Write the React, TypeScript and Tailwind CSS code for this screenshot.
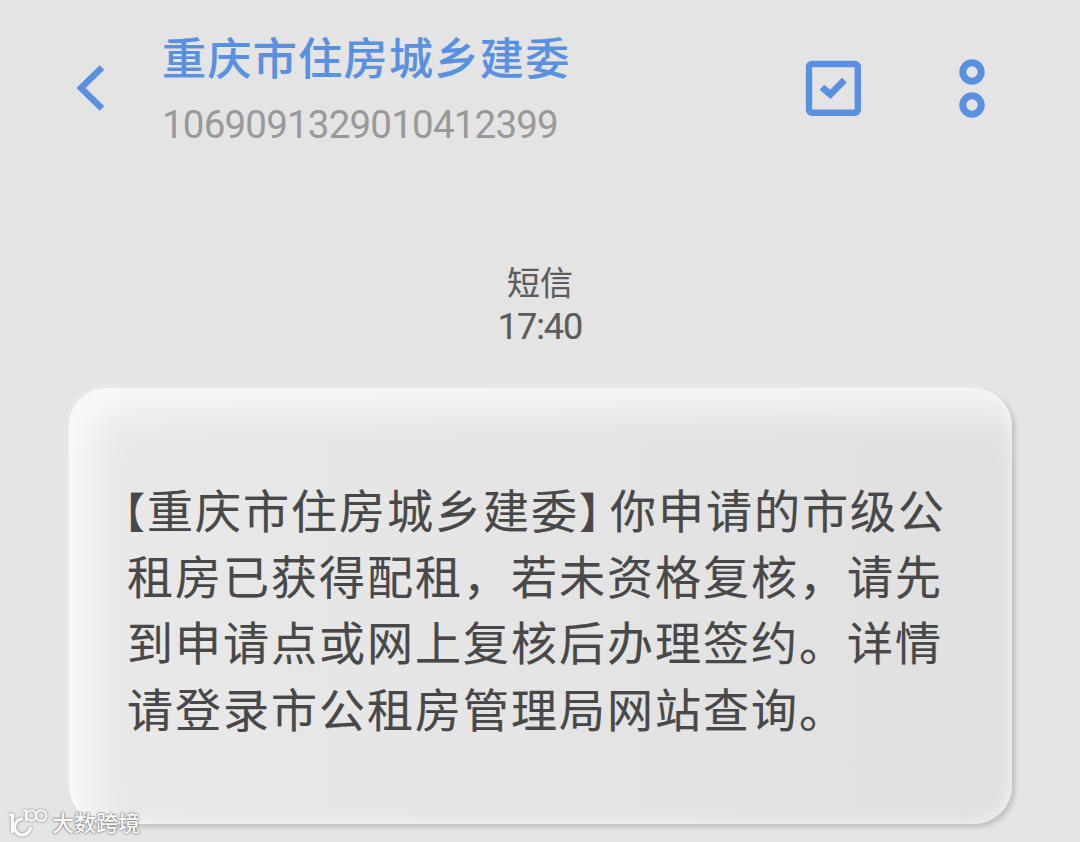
import React from 'react';

const BackIcon = () => (
    <svg width="32" height="50" viewBox="0 0 32 50" fill="none" className="shrink-0">
        <path d="M28 4.5L7 25L28 45.5" stroke="#5a90e0" strokeWidth="6.6" />
    </svg>
);

const SelectIcon = () => (
    <svg width="56" height="56" viewBox="0 0 56 56" fill="none">
        <rect x="4" y="4" width="48.8" height="48.8" rx="3" stroke="#5a90e0" strokeWidth="6.4" />
        <path d="M19.5 29.5L25.4 34.3L37 22.5" stroke="#5a90e0" strokeWidth="6.8" strokeLinecap="square" />
    </svg>
);

const MoreIcon = () => (
    <svg width="26" height="60" viewBox="0 0 26 60" fill="none">
        <circle cx="13" cy="13" r="9.2" stroke="#5a90e0" strokeWidth="7" />
        <circle cx="13" cy="46" r="9.2" stroke="#5a90e0" strokeWidth="7" />
    </svg>
);

const WatermarkLogo = () => (
    <svg width="40" height="30" viewBox="0 0 40 30" fill="none" className="drop-shadow-[0_0_1px_#777]">
        <g stroke="#fafafa" strokeWidth="3.2">
            <path d="M1 7H4.5V25" />
            <path d="M22.5 19A8 8 0 1 1 15 11" />
            <path d="M15 2.5H18V13" strokeWidth="2.2" />
            <circle cx="23.2" cy="7.5" r="5" strokeWidth="2.2" />
            <circle cx="33.2" cy="7.5" r="5.2" strokeWidth="2.2" />
        </g>
    </svg>
);

const Header = () => (
    <header className="flex h-[160px] items-start pl-[74px]">
        <div className="pt-[63px]">
            <BackIcon />
        </div>
        <div className="ml-[56px] w-[643px] pt-[28px]">
            <h1 className="h-[56px] text-[44px] font-medium leading-[56px] tracking-[1.4px] text-[#5a90e0] [-webkit-text-stroke:0.2px_#5a90e0]">重庆市住房城乡建委</h1>
            <p className="mt-[13px] h-[56px] font-['Roboto',sans-serif] text-[38.5px] leading-[56px] tracking-[-0.8px] text-[#999999]">1069091329010412399</p>
        </div>
        <div className="flex pt-[60px]">
            <SelectIcon />
            <div className="ml-[98px] -mt-px">
                <MoreIcon />
            </div>
        </div>
    </header>
);

const Message = () => (
    <div className="ml-[69px] h-[436px] w-[943px] rounded-[38px] bg-linear-to-r from-[#e9e9e9] to-[#e0e0e0] pl-[58px] pt-[87px] shadow-[3px_3px_5px_rgba(0,0,0,0.16),-2px_-2px_5px_rgba(255,255,255,0.35),inset_20px_20px_40px_rgba(255,255,255,0.75),inset_-3px_-3px_12px_rgba(255,255,255,0.35)]">
        <div className="whitespace-nowrap text-[46px] leading-[66.2px] tracking-[2px] text-[#484848] [-webkit-text-stroke:0.2px_#484848]">
            <p className="-ml-[3px] h-[66.2px]">
                <span className="text-[42px] [font-feature-settings:'halt']">【</span>重庆市住房城乡建委
                <span className="mr-[8px] text-[42px] [font-feature-settings:'halt']">】</span>你申请的市级公
            </p>
            <p>租房已获得配租，若未资格复核，请先</p>
            <p>到申请点或网上复核后办理签约。详情</p>
            <p>请登录市公租房管理局网站查询。</p>
        </div>
    </div>
);

const App = () => {
    return (
        <main className="relative h-[842px] w-[1080px] overflow-hidden bg-[#e4e4e4] font-['Noto_Sans_CJK_SC',sans-serif]">
            <Header />
            <div className="flex h-[228px] flex-col items-center pt-[98px] text-[#5c5c5c]">
                <span className="text-[33px] leading-[46px] [-webkit-text-stroke:0.2px_#5c5c5c]">短信</span>
                <span className="mt-px font-['Roboto',sans-serif] text-[36px] leading-[44px] tracking-[-1px] [-webkit-text-stroke:0.2px_#5c5c5c]">17:40</span>
            </div>
            <Message />

            {/* Watermark */}
            <div className="absolute bottom-[4px] left-[8px] flex items-center">
                <WatermarkLogo />
                <span className="-mt-[5px] ml-[4px] text-[22px] font-medium leading-[30px] text-[#fafafa] [text-shadow:0_0_2px_#666,0_0_2px_#888]">大数跨境</span>
            </div>
        </main>
    );
};

export default App;
